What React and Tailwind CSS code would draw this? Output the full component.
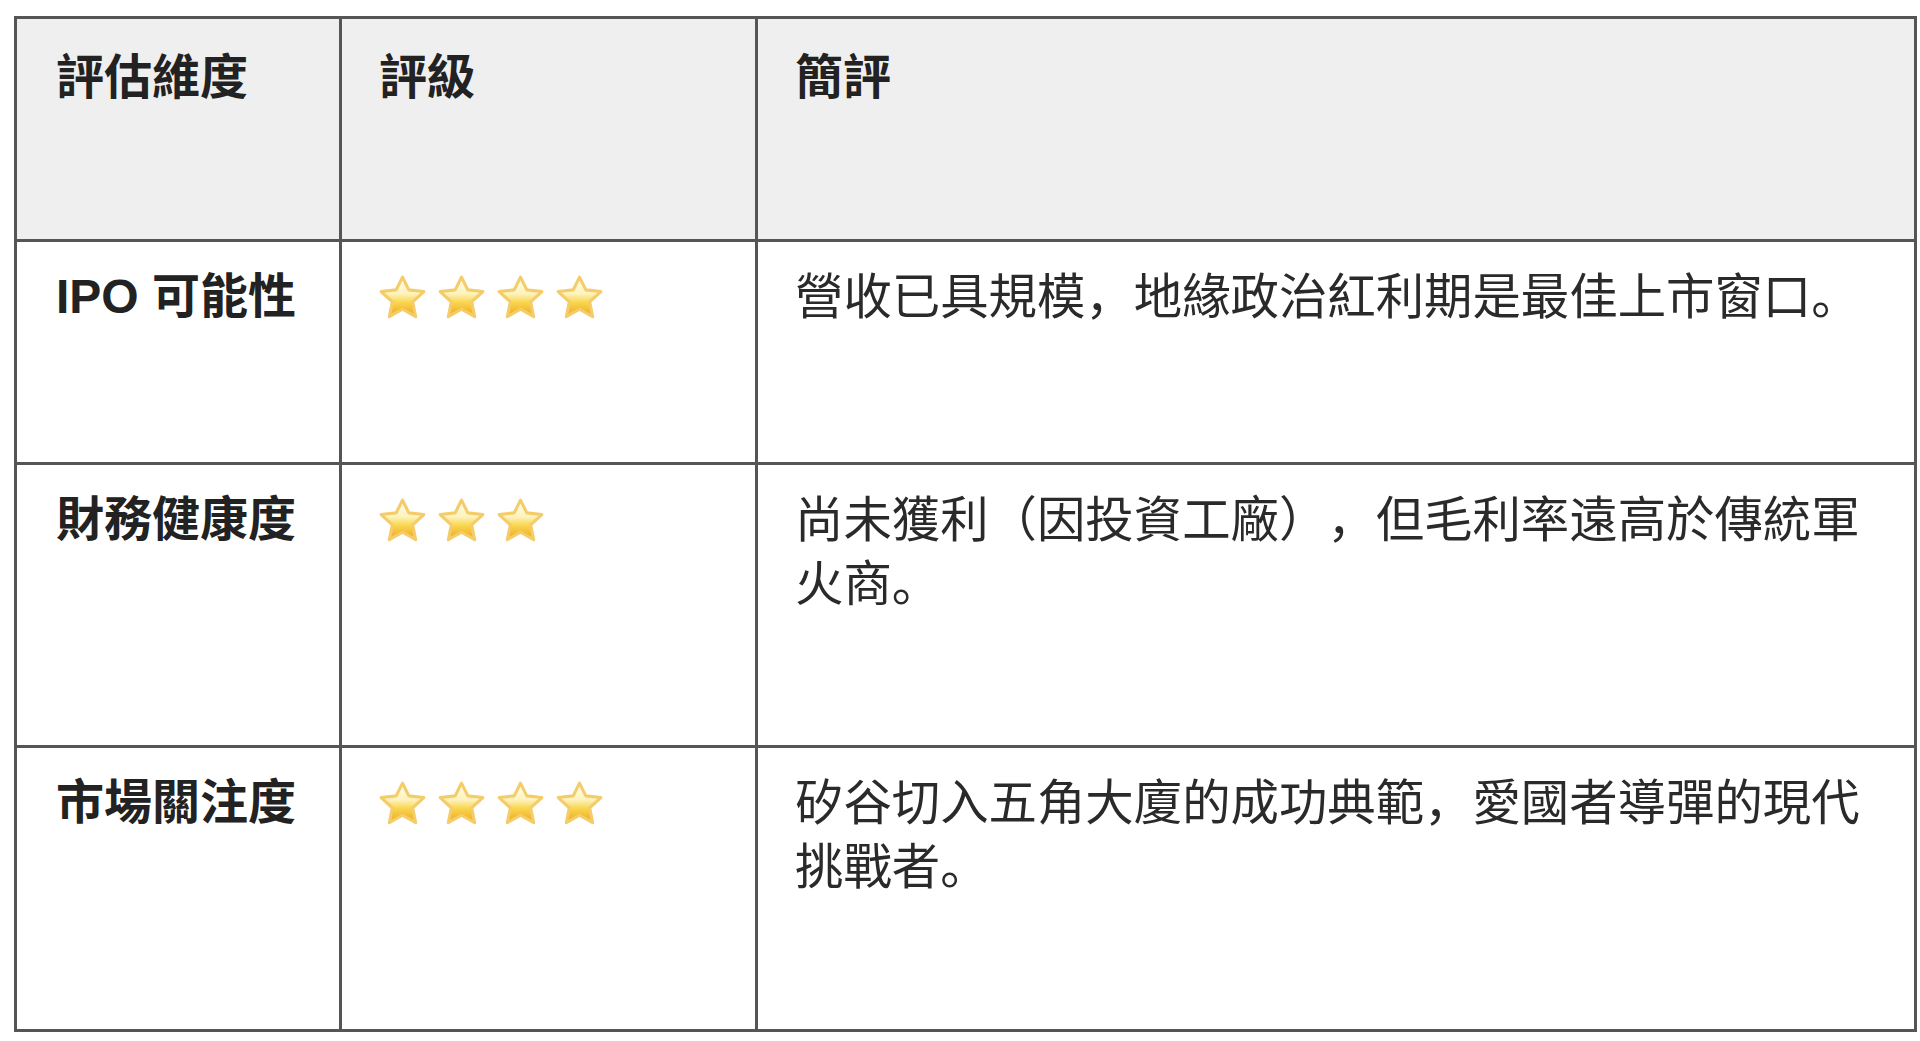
import React from "react";

const rows = [
  { label: "IPO 可能性", stars: 4, note: "營收已具規模，地緣政治紅利期是最佳上市窗口。", h: "h-[223px]" },
  { label: "財務健康度", stars: 3, note: "尚未獲利（因投資工廠），但毛利率遠高於傳統軍火商。", h: "h-[283px]" },
  { label: "市場關注度", stars: 4, note: "矽谷切入五角大廈的成功典範，愛國者導彈的現代挑戰者。", h: "h-[284px]" },
];

function Star() {
  return (
    <svg width="49" height="47" viewBox="0 0 48 46" className="block">
      <defs>
        <linearGradient id="starFill" x1="0" y1="0" x2="0" y2="1">
          <stop offset="0%" stopColor="#fffdf0" />
          <stop offset="42%" stopColor="#fdf3bd" />
          <stop offset="64%" stopColor="#f9d64e" />
          <stop offset="100%" stopColor="#eda51e" />
        </linearGradient>
      </defs>
      <path
        d="M24 3 L30.17 15.51 L44.92 17.2 L33.99 27.24 L36.93 41.8 L24 34.5 L11.07 41.8 L14.01 27.24 L3.08 17.2 L17.83 15.51 Z"
        fill="url(#starFill)"
        stroke="#f4cc6a"
        strokeWidth="3"
        strokeLinejoin="round"
      />
    </svg>
  );
}

export default function App() {
  return (
    <div className="min-h-screen bg-white pt-[16px] pl-[14px]" style={{ fontFamily: '"Liberation Sans", "Noto Sans CJK SC", sans-serif' }}>
      <table className="table-fixed border-collapse w-[1903px] text-[48px] leading-[64px] text-[#222] [text-spacing-trim:space-all] [font-feature-settings:'halt'_0]">
        <colgroup>
          <col className="w-[325px]" />
          <col className="w-[416px]" />
          <col />
        </colgroup>
        <thead>
          <tr className="h-[223px] bg-[#efefef]">
            <th className="border-[3px] border-[#555] align-top text-left font-bold pl-[39px] pr-[30px] pt-[27px]">評估維度</th>
            <th className="border-[3px] border-[#555] align-top text-left font-bold pl-[37px] pr-[30px] pt-[27px]">評級</th>
            <th className="border-[3px] border-[#555] align-top text-left font-bold pl-[37px] pr-[30px] pt-[27px]">簡評</th>
          </tr>
        </thead>
        <tbody>
          {rows.map((r) => (
            <tr key={r.label} className={r.h}>
              <td className="border-[3px] border-[#555] align-top font-bold pl-[39px] pr-[20px] pt-[23px] whitespace-nowrap">{r.label}</td>
              <td className="border-[3px] border-[#555] align-top pl-[36px] pr-[20px] pt-[23px]">
                <div className="flex items-center gap-[10px] h-[64px]">
                  {Array.from({ length: r.stars }).map((_, i) => (
                    <Star key={i} />
                  ))}
                </div>
              </td>
              <td className="border-[3px] border-[#555] align-top pl-[37px] pr-[24px] pt-[23px] text-[#2a2a2a] text-[48.4px]">{r.note}</td>
            </tr>
          ))}
        </tbody>
      </table>
    </div>
  );
}
